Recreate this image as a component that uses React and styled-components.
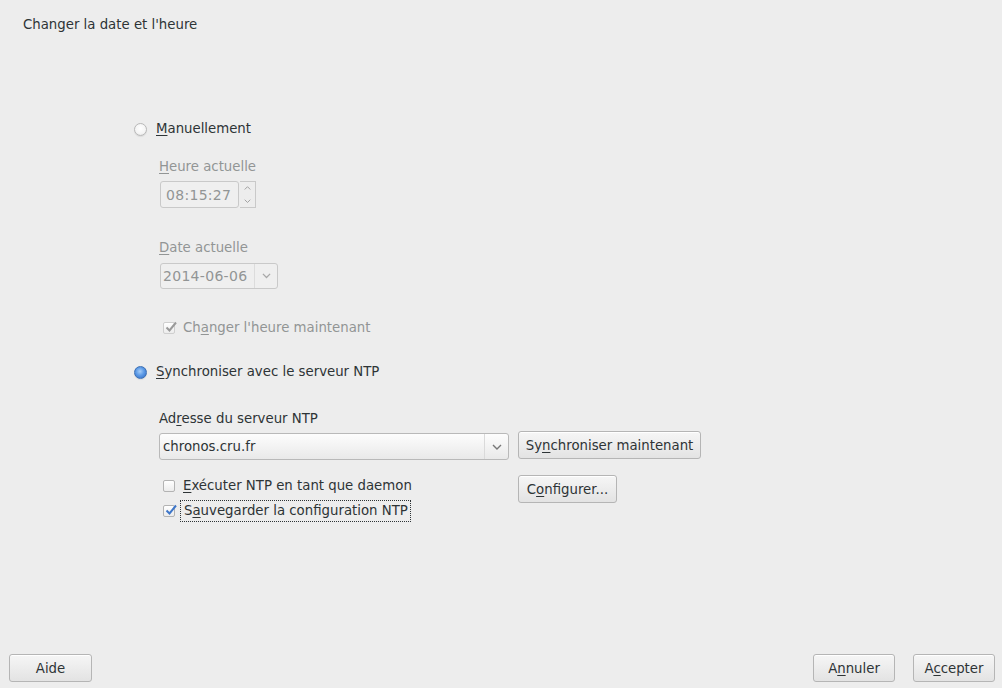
import React from 'react'
import styled, { createGlobalStyle } from 'styled-components'

const Global = createGlobalStyle`
  html, body { margin: 0; padding: 0; background: #ededed; }
  body {
    font-family: "DejaVu Sans", "Liberation Sans", sans-serif;
    font-size: 13.3px;
    color: #2e3436;
  }
  #root { height: 100vh; }
`

const Window = styled.div`
  height: 688px;
  display: flex;
  flex-direction: column;
  box-sizing: border-box;
`

const Title = styled.div`
  line-height: 16px;
  padding: 17px 0 0 23px;
  color: #2e3436;
`

const Content = styled.div`
  flex: 1;
  display: flex;
  flex-direction: column;
  align-items: flex-start;
  padding-left: 133px;
`

const Row = styled.div`
  display: flex;
  align-items: center;
  line-height: 16px;
  margin-top: ${p => p.$top || 0}px;
  margin-left: ${p => p.$left || 0}px;
  color: ${p => (p.$disabled ? '#929595' : '#2e3436')};
`

const Label = styled.div`
  line-height: 16px;
  margin-top: ${p => p.$top || 0}px;
  margin-left: 26px;
  color: ${p => (p.$disabled ? '#929595' : '#2e3436')};
`

const Mn = styled.u`
  text-decoration: underline;
  text-underline-offset: 2px;
`

const Radio = styled.span`
  width: 13px;
  height: 13px;
  border-radius: 50%;
  box-sizing: border-box;
  margin-left: 1px;
  margin-right: 9px;
  border: 1px solid ${p => (p.$on ? '#3b6fb4' : '#b8b8b8')};
  background: ${p =>
    p.$on
      ? 'radial-gradient(circle at 45% 40%, #a7cdf7 0%, #5c9ae6 45%, #2f67c0 100%)'
      : 'radial-gradient(circle at 50% 40%, #ffffff 0%, #f4f4f4 60%, #dcdcdc 100%)'};
  box-shadow: 0 1px 1px rgba(0,0,0,0.08);
`

const Field = styled.div`
  display: flex;
  margin-top: ${p => p.$top || 0}px;
  margin-left: 27px;
  height: ${p => p.$h || 27}px;
`

const SpinInput = styled.div`
  width: 79px;
  box-sizing: border-box;
  border: 1px solid #c9c9c9;
  border-radius: 3px;
  background: #efefef;
  color: #929595;
  padding-left: 5px;
  display: flex;
  align-items: center;
  font-size: 14px;
  letter-spacing: 0.3px;
`

const SpinButtons = styled.div`
  width: 16px;
  margin-left: 1px;
  box-sizing: border-box;
  border: 1px solid #c9c9c9;
  border-left: none;
  display: flex;
  flex-direction: column;
  align-items: center;
  justify-content: space-around;
`

const DateBox = styled.div`
  width: 118px;
  box-sizing: border-box;
  border: 1px solid #c9c9c9;
  border-radius: 3px;
  background: #efefef;
  color: #929595;
  display: flex;
  align-items: center;
  font-size: 14px;
  letter-spacing: 0.3px;
`

const DateText = styled.span`
  flex: 1;
  padding-left: 2px;
  align-self: stretch;
  display: flex;
  align-items: center;
  border-right: 1px solid #dcdcdc;
`

const Arrow = styled.span`
  width: ${p => p.$w || 22}px;
  display: flex;
  justify-content: center;
  align-items: center;
`

const Check = styled.span`
  width: 12px;
  height: 12px;
  box-sizing: border-box;
  border: 1px solid ${p => (p.$disabled ? '#cfcfcf' : '#b3b3b3')};
  border-radius: 2px;
  background: linear-gradient(#ffffff, #ececec);
  margin-right: 8px;
  position: relative;
  flex-shrink: 0;
`

const Tick = styled.svg`
  position: absolute;
  left: 0;
  top: -3px;
`

const Combo = styled.div`
  width: 350px;
  height: 27px;
  box-sizing: border-box;
  border: 1px solid #b9b9b9;
  border-radius: 3px;
  background: linear-gradient(#fdfdfd, #e9e9e9);
  display: flex;
  align-items: center;
  margin-top: 2px;
`

const ComboText = styled.span`
  flex: 1;
  padding-left: 3px;
  align-self: stretch;
  display: flex;
  align-items: center;
  border-right: 1px solid #dadada;
  color: #2e3436;
`

const Button = styled.button`
  font-family: inherit;
  font-size: 13.3px;
  color: #2e3436;
  height: 28px;
  padding: 0;
  width: ${p => p.$w}px;
  border: 1px solid #b5b5b5;
  border-radius: 3px;
  background: linear-gradient(#f6f6f6, #e3e3e3);
  box-shadow: inset 0 1px 0 #ffffff;
  cursor: pointer;
`

const NtpGrid = styled.div`
  display: flex;
  align-items: flex-start;
  margin-left: 26px;
  margin-top: ${p => p.$top || 0}px;
  gap: 9px;
`

const Checks = styled.div`
  width: 350px;
  display: flex;
  flex-direction: column;
`

const Focus = styled.span`
  outline: 1px dotted #2e3436;
  outline-offset: 2px;
  padding: 0 0 0 1px;
`

const Footer = styled.div`
  display: flex;
  align-items: center;
  padding: 0 7px 6px 9px;
  gap: 18px;
`

const Spacer = styled.div`
  flex: 1;
`

const Chevron = ({ up, color = '#8a8a8a', size = 8 }) => (
  <svg width={size} height={size * 0.6} viewBox="0 0 10 6">
    <path
      d={up ? 'M1 5 L5 1 L9 5' : 'M1 1 L5 5 L9 1'}
      fill="none"
      stroke={color}
      strokeWidth="1.4"
    />
  </svg>
)

const TickMark = ({ color }) => (
  <Tick width="14" height="14" viewBox="0 0 14 14">
    <path d="M2.5 7.5 L5.5 10.5 L12 2.5" fill="none" stroke={color} strokeWidth="2" />
  </Tick>
)

const App = () => {
  return (
    <Window>
      <Global />
      <Title>Changer la date et l'heure</Title>
      <Content>
        <Row $top={88}>
          <Radio />
          <span><Mn>M</Mn>anuellement</span>
        </Row>
        <Label $top={22} $disabled>
          <Mn>H</Mn>eure actuelle
        </Label>
        <Field $top={6}>
          <SpinInput>08:15:27</SpinInput>
          <SpinButtons>
            <Chevron up color="#a0a0a0" size={7} />
            <Chevron color="#a0a0a0" size={7} />
          </SpinButtons>
        </Field>
        <Label $top={32} $disabled>
          <Mn>D</Mn>ate actuelle
        </Label>
        <Field $top={7} $h={26}>
          <DateBox>
            <DateText>2014-06-06</DateText>
            <Arrow $w={22}><Chevron color="#a8a8a8" size={9} /></Arrow>
          </DateBox>
        </Field>
        <Row $top={31} $left={30} $disabled>
          <Check $disabled><TickMark color="#9a9a9a" /></Check>
          <span>Ch<Mn>a</Mn>nger l'heure maintenant</span>
        </Row>
        <Row $top={28}>
          <Radio $on />
          <span><Mn>S</Mn>ynchroniser avec le serveur NTP</span>
        </Row>
        <Label $top={31}>
          Ad<Mn>r</Mn>esse du serveur NTP
        </Label>
        <NtpGrid $top={4}>
          <Combo>
            <ComboText>chronos.cru.fr</ComboText>
            <Arrow $w={23}><Chevron color="#777" size={10} /></Arrow>
          </Combo>
          <Button $w={183}>Sy<Mn>n</Mn>chroniser maintenant</Button>
        </NtpGrid>
        <NtpGrid $top={15}>
          <Checks>
            <Row $top={3} $left={4}>
              <Check />
              <span><Mn>E</Mn>xécuter NTP en tant que daemon</span>
            </Row>
            <Row $top={9} $left={4}>
              <Check><TickMark color="#3e76c8" /></Check>
              <Focus>S<Mn>a</Mn>uvegarder la configuration NTP</Focus>
            </Row>
          </Checks>
          <Button $w={99}>C<Mn>o</Mn>nfigurer...</Button>
        </NtpGrid>
      </Content>
      <Footer>
        <Button $w={83}>Aide</Button>
        <Spacer />
        <Button $w={82}>A<Mn>n</Mn>nuler</Button>
        <Button $w={82}>A<Mn>c</Mn>cepter</Button>
      </Footer>
    </Window>
  )
}

export default App
